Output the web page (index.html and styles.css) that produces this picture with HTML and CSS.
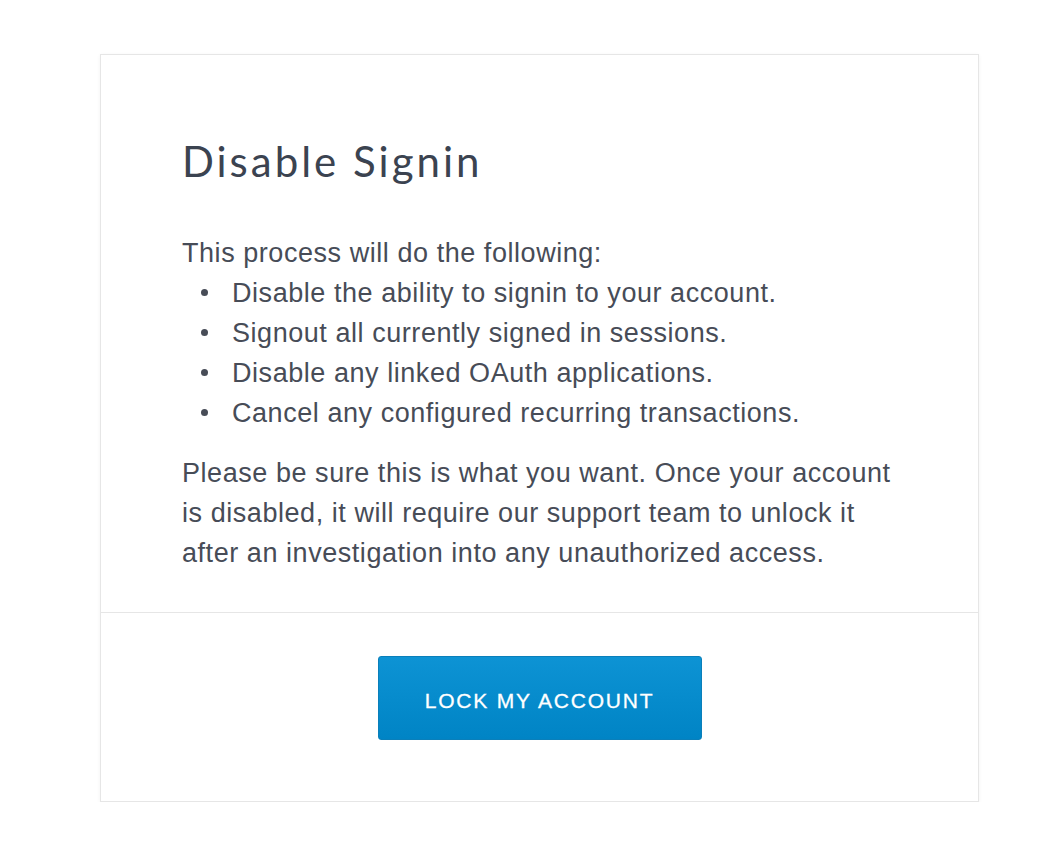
FILE: index.html
```html
<!DOCTYPE html>
<html>
<head>
<meta charset="utf-8">
<link rel="stylesheet" href="styles.css">
</head>
<body>
<div class="card">
  <div class="card-body">
    <h1 class="title">Disable Signin</h1>
    <p class="intro">This process will do the following:</p>
    <ul class="steps">
      <li>Disable the ability to signin to your account.</li>
      <li>Signout all currently signed in sessions.</li>
      <li>Disable any linked OAuth applications.</li>
      <li>Cancel any configured recurring transactions.</li>
    </ul>
    <p class="warning">Please be sure this is what you want. Once your account is disabled, it will require our support team to unlock it after an investigation into any unauthorized access.</p>
  </div>
  <div class="card-footer">
    <button class="lock-btn">LOCK MY ACCOUNT</button>
  </div>
</div>
</body>
</html>
```

FILE: styles.css
```css
html, body {
  margin: 0;
  padding: 0;
  background: #ffffff;
}
body {
  padding: 54px 0 0 100px;
  font-family: "Liberation Sans", Arial, sans-serif;
  color: #474c57;
}
.card {
  width: 877px;
  border: 1px solid #e6e6e6;
  background: #fff;
  box-shadow: 0 1px 4px rgba(0, 0, 0, 0.05);
}
.card-body {
  padding: 78px 81px 39px;
  border-bottom: 1px solid #e6e6e6;
}
.title {
  margin: 0 0 44px;
  font-family: "Lato", "Open Sans", sans-serif;
  font-weight: 400;
  font-size: 42px;
  line-height: 56px;
  letter-spacing: 3px;
  color: #3b4350;
}
.intro, .warning, .steps {
  font-size: 27px;
  line-height: 40px;
  letter-spacing: 0.55px;
}
.intro, .warning {
  margin: 0;
}
.steps {
  margin: 0 0 20px;
  padding-left: 19px;
  list-style: none;
}
.steps li::before {
  content: "";
  display: inline-block;
  width: 7px;
  height: 7px;
  border-radius: 50%;
  background: #474c57;
  margin-right: 24px;
  vertical-align: middle;
  position: relative;
  top: -2px;
}
.card-footer {
  display: flex;
  justify-content: center;
  padding: 43px 0 61px;
}
.lock-btn {
  width: 324px;
  height: 84px;
  padding: 6px 0 0;
  border: 1px solid #0a7fba;
  border-radius: 3px;
  background: linear-gradient(#0d93d4, #0084c5);
  color: #fff;
  font-family: "Liberation Sans", Arial, sans-serif;
  font-size: 21px;
  letter-spacing: 1.8px;
  -webkit-text-stroke: 0.3px #fff;
  cursor: pointer;
}
```
